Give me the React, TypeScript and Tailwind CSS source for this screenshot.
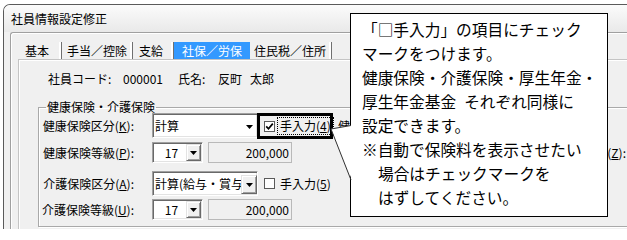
const sunken =
  "border border-t-[#a0a0a0] border-l-[#a0a0a0] border-b-white border-r-white shadow-[inset_1px_1px_0_#696969,inset_-1px_-1px_0_#e3e3e3]";
const raised =
  "border border-t-[#e3e3e3] border-l-[#e3e3e3] border-b-[#696969] border-r-[#696969] shadow-[inset_1px_1px_0_#ffffff,inset_-1px_-1px_0_#a0a0a0] bg-[#f0f0f0]";

function Arrow() {
  return (
    <svg width="7" height="4" viewBox="0 0 7 4">
      <polygon points="0,0 7,0 3.5,4" fill="#000" />
    </svg>
  );
}

function Checkbox({ checked }: { checked?: boolean }) {
  return (
    <div className="w-[11px] h-[11px] border border-[#5a5a5a] bg-white flex items-center justify-center shrink-0">
      {checked && (
        <svg width="9" height="9" viewBox="0 0 9 9">
          <path d="M1.2 4.3 L3.5 6.8 L7.8 1.6" fill="none" stroke="#000" strokeWidth="1.7" />
        </svg>
      )}
    </div>
  );
}

function SmallCombo({ value }: { value: string }) {
  return (
    <div className={`ml-[18px] w-[51px] h-[21px] bg-white flex items-center ${sunken}`}>
      <span className="flex-1 text-center pl-[4px]">{value}</span>
      <div className={`w-[15px] h-[17px] mr-[1px] flex items-center justify-center ${raised}`}>
        <Arrow />
      </div>
    </div>
  );
}

function Amount({ value }: { value: string }) {
  return (
    <div className="ml-[5px] w-[84px] h-[21px] border border-[#b9b9b9] bg-[#f0f0f0] flex items-center justify-end pr-[2px]">
      {value}
    </div>
  );
}

const tabs = [
  { name: "基本", w: "w-[42px]", pl: "pl-[5px]" },
  { name: "手当／控除", w: "w-[71px]", pl: "pl-[5px]" },
  { name: "支給", w: "w-[41px]", pl: "pl-[6px]" },
  { name: "社保／労保", w: "w-[76px]", pl: "pl-[8px]", active: true },
  { name: "住民税／住所", w: "w-[82px]", pl: "pl-[4px]" },
];

export default function App() {
  return (
    <div className="w-[627px] h-[229px] overflow-hidden bg-white relative text-[12px] leading-[16px] text-black font-['Noto_Sans_CJK_JP','Noto_Sans',sans-serif]">
      <div className="ml-[3px] mt-[4px] w-[720px] h-[300px] border-l border-t border-[#5a5a5a] rounded-tl-[7px] bg-[#f0f0f0] overflow-hidden">
        {/* title */}
        <div className="h-[27px] flex items-center pl-[7px] bg-gradient-to-b from-[#fbfbfb] to-[#e9e9e9]">
          社員情報設定修正
        </div>

        {/* inner panel */}
        <div className="ml-[6px] border-t border-l border-[#a0a0a0] rounded-tl-[3px] bg-[#f0f0f0] pt-[9px] pl-[7px] h-[260px] shadow-[inset_1px_1px_0_#ffffff]">
          {/* tab strip */}
          <div className="flex h-[17px] ml-[2px]">
            {tabs.map((t) =>
              t.active ? (
                <div key={t.name} className={`${t.w} ${t.pl} h-full flex items-center bg-[#3399ff] text-white`}>
                  {t.name}
                </div>
              ) : (
                <div
                  key={t.name}
                  className={`${t.w} ${t.pl} h-full flex items-center border-r border-[#707070] shadow-[inset_-2px_0_0_#ffffff]`}
                >
                  {t.name}
                </div>
              )
            )}
          </div>

          {/* tab page */}
          <div className="border-t border-l border-[#c4c4c4] shadow-[inset_1px_1px_0_#ffffff] h-[220px]">
            <div className="mt-[11px] pl-[29px] flex whitespace-nowrap">
              <span className="w-[75px]">社員コード:</span>
              <span className="w-[55px]">000001</span>
              <span className="w-[40px]">氏名:</span>
              <span>
                反町<span className="inline-block w-[8px]" />太郎
              </span>
            </div>

            <fieldset className="mt-[14px] ml-[19px] w-[640px] border border-[#a9a9a9] shadow-[inset_1px_1px_0_#ffffff,1px_1px_0_#ffffff] pb-[6px]">
              <legend className="ml-[7px] px-[1px] leading-[12px]">健康保険・介護保険</legend>

              {/* row 1 */}
              <div className="flex items-start h-[25px] whitespace-nowrap">
                <div className="w-[95px] h-[25px] flex items-center justify-end">
                  健康保険区分(<u>K</u>):
                </div>
                <div className={`ml-[18px] w-[106px] h-[25px] bg-white flex ${sunken}`}>
                  <span className="flex-1 self-center pl-[2px]">計算</span>
                  <div className="w-[16px] h-[19px] self-end mb-[1px] flex items-center justify-center">
                    <Arrow />
                  </div>
                </div>
                <div className="-ml-px w-[76px] h-[26px] border-[3px] border-black flex items-center pl-[4px] shrink-0">
                  <Checkbox checked />
                  <span className="ml-[2px] border border-dotted border-black px-[2px] leading-[16px]">
                    手入力(<u>4</u>)
                  </span>
                </div>
                <div className="ml-[5px] h-[25px] flex items-center">健康保険料</div>
              </div>

              {/* row 2 */}
              <div className="mt-[4px] flex items-center h-[21px] whitespace-nowrap">
                <div className="w-[95px] text-right">
                  健康保険等級(<u>P</u>):
                </div>
                <SmallCombo value="17" />
                <Amount value="200,000" />
                <div className="w-[334px] text-right">
                  厚生年金等級(<u>Z</u>):
                </div>
              </div>

              {/* row 3 */}
              <div className="mt-[8px] flex items-center h-[25px] whitespace-nowrap">
                <div className="w-[95px] text-right">
                  介護保険区分(<u>A</u>):
                </div>
                <div className={`ml-[18px] w-[106px] h-[25px] bg-white flex ${sunken}`}>
                  <span className="flex-1 self-center pl-[2px] overflow-hidden">計算(給与・賞与)</span>
                  <div className={`w-[16px] h-[19px] self-end mb-[1px] flex items-center justify-center shrink-0 ${raised}`}>
                    <Arrow />
                  </div>
                </div>
                <div className="ml-[6px]">
                  <Checkbox />
                </div>
                <span className="ml-[5px]">
                  手入力(<u>5</u>)
                </span>
              </div>

              {/* row 4 */}
              <div className="mt-[3px] flex items-center h-[21px] whitespace-nowrap">
                <div className="w-[95px] text-right">
                  介護保険等級(<u>U</u>):
                </div>
                <SmallCombo value="17" />
                <Amount value="200,000" />
              </div>
            </fieldset>
          </div>
        </div>
      </div>

      {/* callout */}
      <div className="absolute left-[350px] top-[13px] w-[258px] h-[204px] border border-black bg-white z-10 pt-[4px] pl-[11px] text-[15.7px] leading-[24px] whitespace-nowrap">
        <svg className="absolute left-[-21px] top-[109px]" width="23" height="60" viewBox="0 0 23 60">
          <polygon points="1,6 22,2 22,57" fill="#fff" />
          <polyline points="21,2.5 1,6 21,57" fill="none" stroke="#333" strokeWidth="1" />
        </svg>
        <div>「□手入力」の項目にチェック</div>
        <div>マークをつけます。</div>
        <div>健康保険・介護保険・厚生年金・</div>
        <div>
          厚生年金基金<span className="inline-block w-[8px]" />それぞれ同様に
        </div>
        <div>設定できます。</div>
        <div>※自動で保険料を表示させたい</div>
        <div className="pl-[16px]">場合はチェックマークを</div>
        <div className="pl-[16px]">はずしてください。</div>
      </div>
    </div>
  );
}
